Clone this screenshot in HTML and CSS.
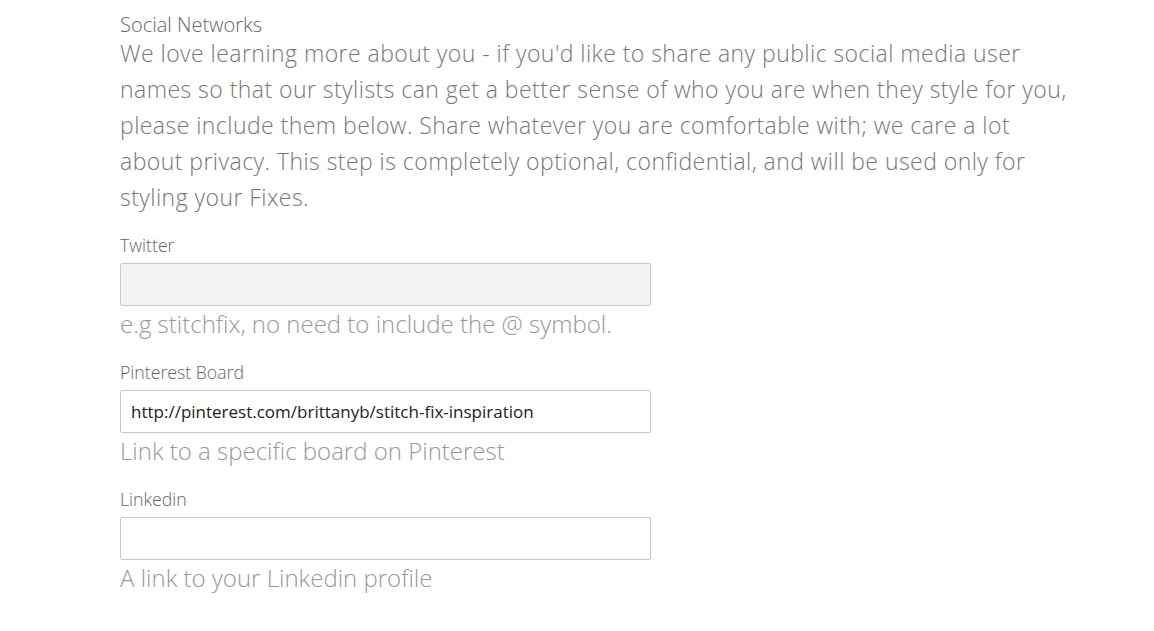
FILE: index.html
```html
<!DOCTYPE html>
<html>
<head>
<meta charset="utf-8">
<link rel="stylesheet" href="styles.css">
</head>
<body>
<div class="page">
  <div class="section-title">Social Networks</div>
  <p class="intro">We love learning more about you - if you'd like to share any public social media user names so that our stylists can get a better sense of who you are when they style for you, please include them below. Share whatever you are comfortable with; we care a lot about privacy. This step is completely optional, confidential, and will be used only for styling your Fixes.</p>

  <div class="field">
    <label class="label">Twitter</label>
    <input class="input input-filled" type="text" value="">
    <div class="hint">e.g stitchfix, no need to include the @ symbol.</div>
  </div>

  <div class="field">
    <label class="label">Pinterest Board</label>
    <input class="input" type="text" value="http://pinterest.com/brittanyb/stitch-fix-inspiration">
    <div class="hint">Link to a specific board on Pinterest</div>
  </div>

  <div class="field">
    <label class="label">Linkedin</label>
    <input class="input" type="text" value="">
    <div class="hint">A link to your Linkedin profile</div>
  </div>
</div>
</body>
</html>
```
FILE: styles.css
```css
html, body {
  margin: 0;
  padding: 0;
  background: #ffffff;
}
body {
  font-family: "Open Sans", "Noto Sans", "Liberation Sans", sans-serif;
  font-weight: 300;
  font-variant-ligatures: none;
}
.page {
  width: 955px;
  padding: 15px 0 0 120px;
}
.section-title {
  font-size: 20px;
  line-height: 20px;
  color: #666666;
}
.intro {
  margin: 0;
  font-size: 23px;
  line-height: 36px;
  letter-spacing: 0.45px;
  color: #777777;
}
.field {
  display: flex;
  flex-direction: column;
  align-items: flex-start;
  margin-top: 20px;
}
.label {
  font-size: 17.7px;
  line-height: 20px;
  color: #666666;
  margin-bottom: 8px;
}
.input {
  box-sizing: border-box;
  width: 531px;
  height: 43px;
  margin: 0;
  padding: 0 10px;
  border: 1px solid #c8c8c8;
  border-radius: 2px;
  background: #ffffff;
  font-family: inherit;
  font-weight: 400;
  font-size: 17px;
  color: #222222;
  outline: none;
}
.input-filled {
  background: #f3f3f3;
}
.hint {
  font-size: 24px;
  line-height: 36px;
  color: #999999;
}
```
